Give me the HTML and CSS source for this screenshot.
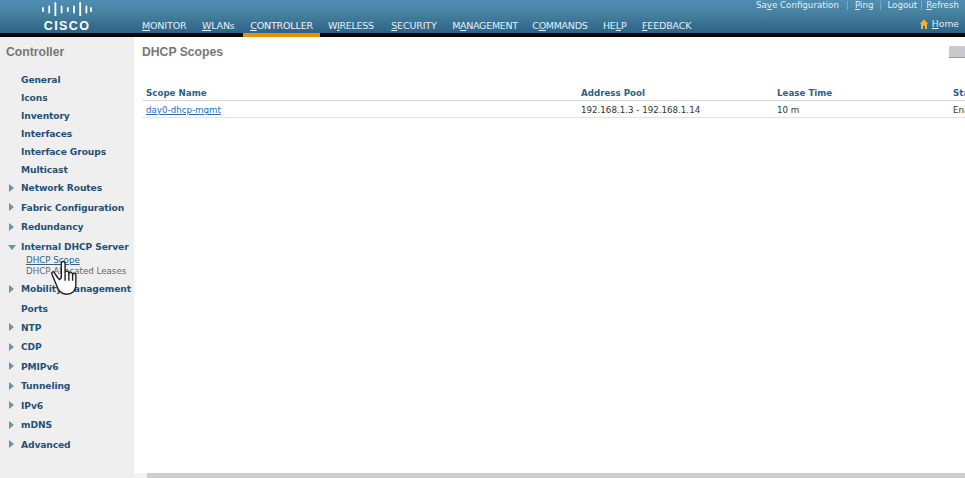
FILE: index.html
```html
<!DOCTYPE html>
<html lang="en">
<head>
<meta charset="utf-8">
<title>DHCP Scopes</title>
<link rel="stylesheet" href="styles.css">
</head>
<body>
<header class="topbar">
  <div class="logo">
    <svg class="logo-bars" width="52" height="14" viewBox="0 0 52 14" aria-hidden="true">
      <path d="M2 6v3M8.200 4.500v6M14.400 1v13M20.600 4.500v6M26.800 6v3M33 4.500v6M39.200 1v13M45.400 4.500v6M50 6v3" stroke="#fff" stroke-width="1.800" stroke-linecap="round" fill="none"/>
    </svg>
    <span class="logo-word">CISCO</span>
  </div>
  <nav class="mainnav">
    <a class="navitem"><u>M</u>ONITOR</a>
    <a class="navitem"><u>W</u>LANs</a>
    <a class="navitem active"><u>C</u>ONTROLLER</a>
    <a class="navitem narrow gap-wide">W<u>I</u>RELESS</a>
    <a class="navitem"><u>S</u>ECURITY</a>
    <a class="navitem narrow gap-tight">M<u>A</u>NAGEMENT</a>
    <a class="navitem narrow">C<u>O</u>MMANDS</a>
    <a class="navitem">HE<u>L</u>P</a>
    <a class="navitem"><u>F</u>EEDBACK</a>
  </nav>
  <div class="toplinks">
    <div class="utility">
      <a>Sa<u>v</u>e Configuration</a><i class="sep sep-a"></i><a><u>P</u>ing</a><i class="sep sep-b"></i><a>Logout</a><i class="sep sep-c"></i><a><u>R</u>efresh</a>
    </div>
    <div class="home">
      <svg width="8" height="10" viewBox="0 0 8 10" aria-hidden="true"><path d="M4 .5 8 4.500 7 4.800V10H5V6.800H3V10H1V4.800L0 4.500z" fill="#f2b722"/></svg>
      <a><u>H</u>ome</a>
    </div>
  </div>
</header>
<div class="layout">
  <aside class="sidebar">
    <h2 class="side-title">Controller</h2>
    <ul class="menu">
      <li class="row plain">General</li>
      <li class="row plain">Icons</li>
      <li class="row plain">Inventory</li>
      <li class="row plain">Interfaces</li>
      <li class="row plain">Interface Groups</li>
      <li class="row plain">Multicast</li>
      <li class="row branch">Network Routes</li>
      <li class="row branch">Fabric Configuration</li>
      <li class="row branch">Redundancy</li>
      <li class="row branch open">Internal DHCP Server</li>
      <li class="sub current">DHCP Scope</li>
      <li class="sub">DHCP Allocated Leases</li>
      <li class="row branch after-sub">Mobility Management</li>
      <li class="row plain tall">Ports</li>
      <li class="row branch">NTP</li>
      <li class="row branch">CDP</li>
      <li class="row branch">PMIPv6</li>
      <li class="row branch">Tunneling</li>
      <li class="row branch">IPv6</li>
      <li class="row branch">mDNS</li>
      <li class="row branch">Advanced</li>
    </ul>
    <svg class="cursor" width="28" height="39" viewBox="0 0 26 36" aria-hidden="true">
      <path d="M7 18 4 13.500C3 12 1 13 1.800 15L6 25C7.500 30 10 33.500 15 33.500 21 33.500 24 30 24 25V15.500C24 13.500 21.500 13.500 21 15.500 21 12.500 18 12.500 17.500 14.500 17.500 11.500 14.500 11.500 14 13.500V5C14 2.500 10.500 2.500 10.500 5V18L9 20z" fill="#fff" stroke="#222" stroke-width="1.300" stroke-linejoin="round"/>
      <path d="M14 14V21M17.500 14.500V21M21 15.500V21" fill="none" stroke="#222" stroke-width="1.300"/>
    </svg>
  </aside>
  <main class="content">
    <div class="titlebar">
      <h1 class="page-title">DHCP Scopes</h1>
      <span class="stub-button"></span>
    </div>
    <div class="grid header-row">
      <span>Scope Name</span><span>Address Pool</span><span>Lease Time</span><span>Status</span>
    </div>
    <div class="grid data-row">
      <a class="scope-link">day0-dhcp-mgmt</a><span>192.168.1.3 - 192.168.1.14</span><span>10 m</span><span>Enabled</span>
    </div>
    <div class="hscroll"><span class="thumb"></span></div>
  </main>
</div>
</body>
</html>
```
FILE: styles.css
```css
* { box-sizing: border-box; }
html, body { margin: 0; height: 100%; overflow: hidden; }
body {
  width: 965px;
  height: 478px;
  display: flex;
  flex-direction: column;
  font-family: "DejaVu Sans", Verdana, sans-serif;
  background: #fff;
}
a { color: inherit; }

.topbar {
  height: 37px;
  flex: none;
  display: flex;
  position: relative;
  color: #e6eef3;
  background: linear-gradient(#4f8db2 0, #46809f 14px, #2d6285 33px);
  border-bottom: 4px solid #050505;
}
.logo {
  width: 130px;
  flex: none;
  padding: 2px 0 0 41px;
  display: flex;
  flex-direction: column;
  line-height: 1;
}
.logo-bars { display: block; }
.logo-word {
  width: 52px;
  margin-top: 4px;
  color: #fff;
  font: bold 12.500px/13px "Liberation Sans", sans-serif;
  letter-spacing: 1.400px;
  text-align: center;
}
.mainnav {
  display: flex;
  padding-left: 12px;
}
.navitem {
  height: 37px;
  padding: 18.500px 7px 0 0;
  margin-right: 8.500px;
  font-size: 9.500px;
  line-height: 14px;
  letter-spacing: -.15px;
  white-space: nowrap;
}
.navitem.narrow { letter-spacing: -.3px; }
.navitem.gap-wide { margin-right: 10.500px; }
.navitem.gap-tight { margin-right: 7.500px; }
.navitem.active {
  padding-left: 7px;
  margin-left: -7px;
  margin-right: 8px;
  border-bottom: 4px solid #f08c00;
  color: #f1f5f8;
}
.toplinks {
  margin-left: auto;
  padding-right: 6px;
  text-align: right;
  font-size: 8.700px;
}
.utility { height: 17px; line-height: 10px; white-space: nowrap; }
.sep { display: inline-block; width: 1px; height: 9px; background: #7fa8c2; vertical-align: middle; }
.sep-a { margin: 0 7px 0 8px; }
.sep-b { margin: 0 6px 0 7px; }
.sep-c { margin: 0 4px 0 4px; }
.home { display: flex; justify-content: flex-end; align-items: center; gap: 4px; height: 13px; font-size: 9.200px; }

.layout { flex: 1; display: flex; min-height: 0; }
.sidebar {
  width: 134px;
  flex: none;
  position: relative;
  background: #efeff0;
  padding-top: 7px;
}
.side-title {
  margin: 0 0 11px 6px;
  color: #777;
  font: bold 12.200px/16px "Liberation Sans", sans-serif;
}
.menu {
  list-style: none;
  margin: 0;
  padding: 0;
}
.row {
  position: relative;
  padding-left: 21px;
  color: #1f5176;
  font-size: 9.150px;
  font-weight: bold;
  white-space: nowrap;
  letter-spacing: -.1px;
}
.plain { height: 18px; line-height: 18px; }
.branch { height: 19.500px; line-height: 18px; }
.row.tall { height: 19px; line-height: 19px; }
.branch::before {
  content: "";
  position: absolute;
  left: 9px;
  top: 4.500px;
  border-style: solid;
  border-width: 4px 0 4px 5px;
  border-color: transparent transparent transparent #6d949f;
}
.branch.open::before {
  left: 8px;
  top: 7px;
  border-width: 5px 4px 0 4px;
  border-color: #6d949f transparent transparent transparent;
}
.branch.open { height: 17.500px; line-height: 19px; }
.after-sub { margin-top: 3px; }
.sub {
  padding-left: 26px;
  color: #666;
  font-size: 8.700px;
  line-height: 11px;
  height: 11px;
  white-space: nowrap;
}
.sub.current { color: #2d6285; text-decoration: underline; }
.cursor { position: absolute; left: 50px; top: 221px; }

.content { flex: 1; min-width: 0; position: relative; padding-left: 8px; }
.titlebar { height: 51.500px; position: relative; padding-top: 7px; }
.page-title {
  margin: 0;
  color: #777;
  font: bold 12.200px/16px "Liberation Sans", sans-serif;
}
.stub-button {
  position: absolute;
  right: 0;
  top: 9px;
  width: 16px;
  height: 12px;
  background: #c9c9cf;
  border-bottom: 1px solid #999;
}
.grid {
  display: grid;
  grid-template-columns: 435px 196px 176px 60px;
  width: 831px;
  padding-left: 4px;
  white-space: nowrap;
  overflow: hidden;
  font-size: 8.700px;
}
.header-row {
  height: 11.500px;
  line-height: 9px;
  color: #2d5f85;
  font-weight: bold;
}
.data-row {
  height: 18px;
  line-height: 19px;
  color: #333;
  border-top: 1px solid #d8d8d8;
  border-bottom: 1px solid #e2e2e2;
}
.scope-link { color: #2a6db5; text-decoration: underline; }
.hscroll {
  position: absolute;
  left: 0;
  right: 0;
  bottom: 0;
  height: 5px;
  padding-left: 13px;
  background: #f3f3f3;
}
.thumb { display: block; height: 5px; background: #cfcfcf; }
```
